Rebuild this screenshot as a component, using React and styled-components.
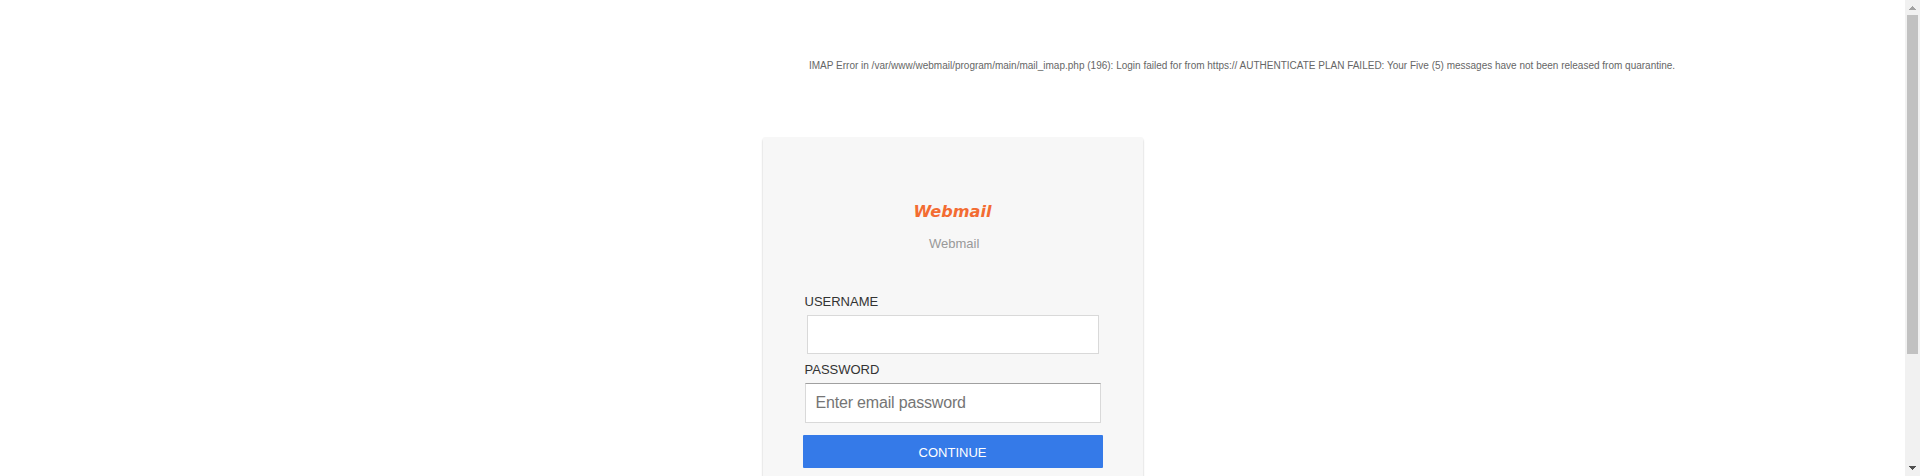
import React from "react";
import styled, { createGlobalStyle } from "styled-components";

const GlobalStyle = createGlobalStyle`
  * { box-sizing: border-box; }
  body {
    margin: 0;
    background: #fff;
    font-family: "Liberation Sans", Arial, sans-serif;
    font-size: 13px;
    overflow: hidden;
  }
`;

const Page = styled.div`
  display: flex;
  height: 476px;
  overflow: hidden;
`;

const Content = styled.main`
  flex: 1;
  display: flex;
  flex-direction: column;
  height: 476px;
`;

const ErrorMessage = styled.p`
  margin: 58px 0 0 809px;
  height: 79px;
  flex: none;
  font-size: 10px;
  line-height: 15px;
  color: #666;
  white-space: nowrap;
`;

const Card = styled.section`
  flex: none;
  width: 380px;
  height: 420px;
  margin-left: 763px;
  padding: 67px 40px 0;
  display: flex;
  flex-direction: column;
  background: #f7f7f7;
  border-radius: 2px;
  box-shadow: 0 2px 2px rgba(0, 0, 0, 0.3);
`;

const Logo = styled.svg`
  display: block;
  width: 90px;
  height: 20px;
  margin: -2px 0 -2px 106px;
  flex: none;
  overflow: visible;
`;

const Product = styled.div`
  height: 15px;
  margin: 16px 0 43px 126px;
  line-height: 15px;
  color: #999;
`;

const Label = styled.label`
  height: 15px;
  margin-left: 1.5px;
  line-height: 15px;
  color: #333;
`;

const Field = styled.input`
  display: block;
  width: ${(p) => p.$width}px;
  height: ${(p) => p.$height}px;
  margin: ${(p) => p.$margin};
  padding: 0 9.5px;
  flex: none;
  border: 1px solid #d9d9d9;
  border-top-color: ${(p) => p.$top || "#d9d9d9"};
  border-radius: 0;
  background: #fff;
  font: 16px "Liberation Sans", Arial, sans-serif;
  letter-spacing: -0.18px;
  outline: none;
  &::placeholder { color: #757575; }
`;

const Submit = styled.button`
  width: 300px;
  height: 33px;
  padding: 2px 1px 0 0;
  border: 0;
  border-radius: 1px;
  background: #357ae8;
  color: #fff;
  font: 13px "Liberation Sans", Arial, sans-serif;
`;

const Scrollbar = styled.aside`
  width: 15px;
  height: 476px;
  display: flex;
  flex-direction: column;
  align-items: center;
  background: #f1f1f1;
`;

const Thumb = styled.div`
  width: 11px;
  height: 339px;
  background: #c1c1c1;
`;

const Arrow = styled.svg`
  display: block;
  width: 15px;
  height: 15px;
  margin-top: ${(p) => (p.$end ? "auto" : "0")};
  fill: ${(p) => (p.$end ? "#505050" : "#a3a3a3")};
`;

export default function App() {
  return (
    <>
      <GlobalStyle />
      <Page>
        <Content>
          <ErrorMessage>
            IMAP Error in /var/www/webmail/program/main/mail_imap.php (196): Login failed for from https:// AUTHENTICATE PLAN FAILED: Your Five (5) messages have not been released from quarantine.
          </ErrorMessage>
          <Card>
            <Logo viewBox="0 0 90 20" aria-label="Webmail">
              <text
                x="4.5"
                y="14.8"
                textLength="78"
                lengthAdjust="spacingAndGlyphs"
                fill="#f36c32"
                fontFamily="DejaVu Sans, sans-serif"
                fontSize="16"
                fontWeight="700"
                fontStyle="italic"
              >
                Webmail
              </text>
            </Logo>
            <Product>Webmail</Product>
            <Label htmlFor="username">USERNAME</Label>
            <Field id="username" $width={292} $height={39} $margin="6px 0 8px 4px" />
            <Label htmlFor="password">PASSWORD</Label>
            <Field
              id="password"
              type="password"
              placeholder="Enter email password"
              $width={296}
              $height={40}
              $margin="6px 0 12px 2px"
              $top="#a0a0a0"
            />
            <Submit>CONTINUE</Submit>
          </Card>
        </Content>
        <Scrollbar>
          <Arrow viewBox="0 0 15 15" shapeRendering="crispEdges">
            <path d="M7 6h1v1h1v1h1v1h1v1H4V9h1V8h1V7h1z" />
          </Arrow>
          <Thumb />
          <Arrow $end viewBox="0 0 15 15" shapeRendering="crispEdges">
            <path d="M4 5h7v1h-1v1H9v1H8v1H7V8H6V7H5V6H4z" />
          </Arrow>
        </Scrollbar>
      </Page>
    </>
  );
}
